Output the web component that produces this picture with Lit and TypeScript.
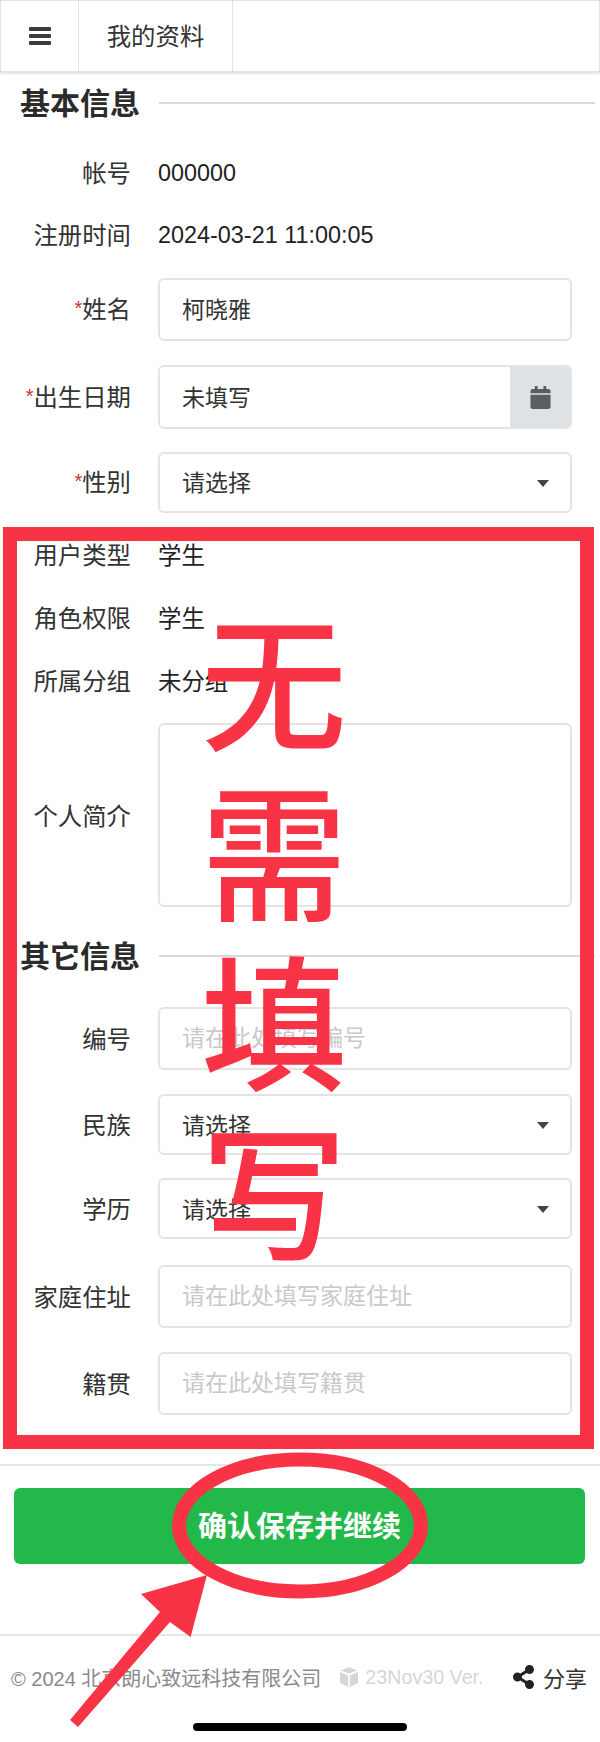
import { LitElement, html, css, svg } from 'lit';
import { customElement } from 'lit/decorators.js';

const CARET = html`<svg class="caret" viewBox="0 0 12 7"><path d="M0 0h12L6 7z" /></svg>`;

@customElement('app-root')
export class AppRoot extends LitElement {
  static styles = css`
    :host {
      display: block;
      position: relative;
      width: 600px;
      height: 1742px;
      overflow: hidden;
      background: #fff;
      color: #333;
      font-family: "Liberation Sans", "Noto Sans CJK SC", sans-serif;
      font-size: 23.4px;
    }

    .header {
      display: flex;
      height: 72px;
      box-sizing: border-box;
      border: 1px solid #e4e4e4;
      box-shadow: 0 1px 3px rgba(0, 0, 0, 0.18);
    }
    .menu {
      width: 77px;
      display: flex;
      align-items: center;
      justify-content: center;
      border-right: 1px solid #e4e4e4;
    }
    .menu svg {
      width: 22px;
      height: 18px;
      fill: #3b3b3b;
    }
    .title {
      width: 154px;
      display: flex;
      align-items: center;
      justify-content: center;
      border-right: 1px solid #e4e4e4;
      padding-bottom: 4px;
      box-sizing: border-box;
      font-size: 24.400px;
      color: #333;
    }

    main {
      padding-top: 6px;
    }
    .heading {
      display: flex;
      align-items: center;
      height: 50px;
      padding-left: 20px;
    }
    .heading h2 {
      margin: 0 0 4px;
      width: 139px;
      flex: none;
      font-size: 30px;
      font-weight: 700;
      color: #2b2b2b;
    }
    .heading i {
      flex: 1;
      height: 2px;
      margin-right: 5px;
      background: #d9d9d9;
    }
    .heading.first {
      margin-bottom: 14px;
    }
    .heading.second {
      margin-top: 24px;
      margin-bottom: 26px;
    }

    .row {
      display: grid;
      grid-template-columns: 131px 414px;
      column-gap: 27px;
      align-items: center;
      margin-bottom: 24px;
    }
    .row.static {
      height: 62px;
      margin-bottom: 0;
    }
    .row.static.tall {
      height: 63px;
    }
    .row.sel {
      margin-bottom: 23px;
    }
    .row.wide {
      margin-bottom: 26px;
    }
    .row.gap-top {
      margin-top: 12px;
    }
    .row.gap-small {
      margin-top: 10px;
    }
    .row.pull-up {
      margin-top: -12px;
    }

    label {
      text-align: right;
      font-size: 24.400px;
      padding-bottom: 4px;
      color: #333;
      white-space: nowrap;
    }
    label b {
      font-weight: 400;
      color: #c9303e;
      font-size: 20px;
      vertical-align: 3px;
    }
    .value {
      color: #222;
    }
    .value.cjk {
      padding-bottom: 4px;
    }

    input,
    textarea,
    select {
      display: block;
      width: 100%;
      box-sizing: border-box;
      margin: 0;
      border: 2px solid #e4e4e4;
      border-radius: 6px;
      background: #fff;
      color: #333;
      font: inherit;
      font-size: 23px;
      padding: 0 22px;
      outline: none;
      appearance: none;
    }
    input {
      height: 63px;
      padding-bottom: 3px;
    }
    input::placeholder {
      color: #c9c9c9;
      opacity: 1;
    }
    textarea {
      height: 184px;
      resize: none;
    }
    select {
      height: 61px;
    }
    .select {
      position: relative;
    }
    .caret {
      position: absolute;
      right: 23px;
      top: 50%;
      width: 12px;
      height: 7px;
      margin-top: -3px;
      fill: #444;
    }

    /* the lower half of the form sits a little lower in its rows */
    .low label {
      padding-bottom: 2px;
    }
    .low input {
      padding-bottom: 0;
    }
    .low select {
      padding-top: 2px;
    }

    .date {
      display: flex;
      height: 64px;
      box-sizing: border-box;
      border: 2px solid #e4e4e4;
      border-radius: 6px;
      overflow: hidden;
    }
    .date input {
      flex: 1;
      min-width: 0;
      height: auto;
      border: 0;
      border-radius: 0;
      padding: 0 22px 3px;
    }
    .date span {
      flex: none;
      width: 60px;
      display: flex;
      align-items: center;
      justify-content: center;
      background: #dfe2e4;
    }
    .date svg {
      width: 21px;
      height: 23px;
      fill: #5a5e62;
    }

    .divider {
      height: 2px;
      margin-top: 49px;
      background: #e6e6e6;
    }
    .save {
      display: block;
      width: 571px;
      height: 76px;
      margin: 22px 0 0 14px;
      padding: 0 0 4px;
      border: 0;
      border-radius: 6px;
      background: #22b84a;
      color: #fff;
      font: inherit;
      font-size: 29px;
      font-weight: 700;
    }

    footer {
      display: flex;
      align-items: center;
      height: 84px;
      margin-top: 70px;
      padding: 0 13px 0 11px;
      border-top: 2px solid #e6e6e6;
      font-size: 20px;
      color: #8a8a8a;
      box-sizing: border-box;
    }
    .copy {
      white-space: nowrap;
    }
    .ver {
      display: flex;
      align-items: center;
      gap: 7px;
      margin-left: 19px;
      font-size: 19.700px;
      color: #d6d6d6;
      white-space: nowrap;
    }
    .ver svg {
      width: 18px;
      height: 20px;
      fill: #d6d6d6;
    }
    .share {
      display: flex;
      align-items: center;
      gap: 9px;
      margin-left: auto;
      font-size: 22px;
      color: #333;
      white-space: nowrap;
    }
    .share svg {
      width: 21px;
      height: 24px;
      fill: #222;
    }

    .home-bar {
      position: absolute;
      left: 193px;
      top: 1723px;
      width: 214px;
      height: 8px;
      border-radius: 4px;
      background: #000;
    }

    /* red marks drawn over the form */
    .mark-box {
      position: absolute;
      left: 3px;
      top: 527px;
      width: 591px;
      height: 922px;
      box-sizing: border-box;
      border: 14px solid #f93346;
    }
    .mark-text {
      position: absolute;
      left: 201px;
      top: 591px;
      width: 146px;
      display: flex;
      flex-direction: column;
      align-items: center;
      color: #f93346;
      font-family: "Noto Sans CJK SC", sans-serif;
      font-size: 146px;
      line-height: 170px;
      font-weight: 500;
    }
    .mark-svg {
      position: absolute;
      left: 0;
      top: 0;
      width: 600px;
      height: 1742px;
      pointer-events: none;
    }
  `;

  private field(name: string, required = false) {
    return html`<label>${required ? html`<b>*</b>` : ''}${name}</label>`;
  }

  private staticRow(name: string, value: string, extra = '', valueClass = '') {
    return html`<div class="row static ${extra}">
      ${this.field(name)}
      <div class="value ${valueClass}">${value}</div>
    </div>`;
  }

  private selectRow(name: string, required = false, extra = '') {
    return html`<div class="row sel ${extra}">
      ${this.field(name, required)}
      <div class="select">
        <select><option>请选择</option></select>
        ${CARET}
      </div>
    </div>`;
  }

  private inputRow(name: string, placeholder: string) {
    return html`<div class="row">
      ${this.field(name)}
      <input placeholder=${placeholder} />
    </div>`;
  }

  render() {
    return html`
      <div class="header">
        <div class="menu">
          <svg viewBox="0 0 22 18">
            <rect width="22" height="4" rx="1" />
            <rect y="7" width="22" height="4" rx="1" />
            <rect y="14" width="22" height="4" rx="1" />
          </svg>
        </div>
        <div class="title">我的资料</div>
      </div>

      <main>
        <div class="heading first"><h2>基本信息</h2><i></i></div>
        ${this.staticRow('帐号', '000000')}
        ${this.staticRow('注册时间', '2024-03-21 11:00:05')}

        <div class="row gap-top">
          ${this.field('姓名', true)}
          <input value="柯晓雅" />
        </div>
        <div class="row sel">
          ${this.field('出生日期', true)}
          <div class="date">
            <input value="未填写" />
            <span>
              <svg viewBox="0 0 448 512">
                <path d="M12 192h424c6.600 0 12 5.400 12 12v260c0 26.500-21.500 48-48 48H48c-26.500 0-48-21.500-48-48V204c0-6.600 5.400-12 12-12zm436-44v-36c0-26.500-21.500-48-48-48h-48V12c0-6.600-5.400-12-12-12h-40c-6.600 0-12 5.400-12 12v52H160V12c0-6.600-5.400-12-12-12h-40c-6.600 0-12 5.400-12 12v52H48C21.500 64 0 85.500 0 112v36c0 6.600 5.400 12 12 12h424c6.600 0 12-5.400 12-12z" />
              </svg>
            </span>
          </div>
        </div>
        ${this.selectRow('性别', true)}

        ${this.staticRow('用户类型', '学生', 'tall pull-up', 'cjk')}
        ${this.staticRow('角色权限', '学生', 'tall', 'cjk')}
        ${this.staticRow('所属分组', '未分组', 'tall', 'cjk')}

        <div class="low">
          <div class="row gap-small">
            ${this.field('个人简介')}
            <textarea></textarea>
          </div>

          <div class="heading second"><h2>其它信息</h2><i></i></div>
          ${this.inputRow('编号', '请在此处填写编号')}
          ${this.selectRow('民族')}
          ${this.selectRow('学历', false, 'wide')}
          ${this.inputRow('家庭住址', '请在此处填写家庭住址')}
          ${this.inputRow('籍贯', '请在此处填写籍贯')}
        </div>

        <div class="divider"></div>
        <button class="save">确认保存并继续</button>
      </main>

      <footer>
        <span class="copy">© 2024 北京朗心致远科技有限公司</span>
        <span class="ver">
          <svg viewBox="0 0 18 20">
            <path d="M9 0l8 3.400L9 6.800 1 3.400z" />
            <path d="M0 5l8.200 3.500V20L0 16z" />
            <path d="M18 5L9.800 8.500V20L18 16z" />
          </svg>
          23Nov30 Ver.
        </span>
        <span class="share">
          <svg viewBox="0 0 448 512">
            <path d="M352 320c-22.608 0-43.387 7.819-59.790 20.895l-102.486-64.054a96.551 96.551 0 0 0 0-41.683l102.486-64.054C308.613 184.181 329.392 192 352 192c53.019 0 96-42.981 96-96S405.019 0 352 0s-96 42.981-96 96c0 7.158.79 14.130 2.276 20.841L155.790 180.895C139.387 167.819 118.608 160 96 160c-53.019 0-96 42.981-96 96s42.981 96 96 96c22.608 0 43.387-7.819 59.790-20.895l102.486 64.054A96.301 96.301 0 0 0 256 416c0 53.019 42.981 96 96 96s96-42.981 96-96-42.981-96-96-96z" />
          </svg>
          分享
        </span>
      </footer>

      <div class="home-bar"></div>

      <div class="mark-box"></div>
      <div class="mark-text">
        <span>无</span><span>需</span><span>填</span><span>写</span>
      </div>
      <svg class="mark-svg" viewBox="0 0 600 1742">
        ${svg`
          <ellipse cx="300" cy="1525.500" rx="121" ry="66" fill="none" stroke="#f93346" stroke-width="14" />
          <path fill="#f93346" d="M207 1575L141 1594 160 1612 70 1720 78 1727 170 1622 190.600 1637z" />
        `}
      </svg>
    `;
  }
}
